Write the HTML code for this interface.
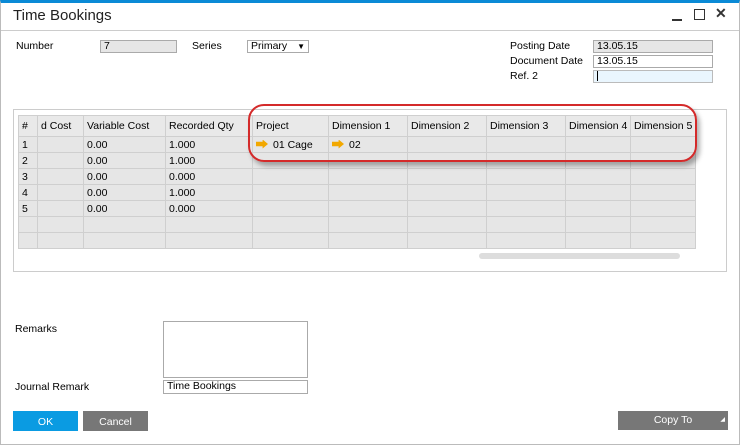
<!DOCTYPE html>
<html><head><style>
*{margin:0;padding:0;box-sizing:border-box}
body{width:740px;height:445px;background:#fff;font-family:"Liberation Sans",sans-serif;font-size:10.5px;color:#000;position:relative;overflow:hidden}
.a{position:absolute}
.frame{left:0;top:0;width:740px;height:445px;border:1px solid #bbb;border-top:3px solid #0a8ad6}
.inp{position:absolute;height:13px;border:1px solid #aaa;padding-left:3px;line-height:11px;font-size:10.5px}
table{border-collapse:collapse;position:absolute;left:18px;top:115px}
td{border:1px solid #cfcfcf;background:#e6e6e6;height:16px;padding-left:3px;font-size:10.5px;white-space:nowrap;overflow:hidden}
tr.h td{height:21px;background:#e9e9e9}
.btn{position:absolute;top:411px;height:20px;color:#fff;text-align:center;line-height:20px;font-size:10.5px}
.arr{display:inline-block;width:12px;height:9px;background:#f2a800;clip-path:polygon(0 25%,55% 25%,55% 0,100% 50%,55% 100%,55% 75%,0 75%);margin-right:5px;vertical-align:-1px}
</style></head><body>
<div class="a frame"></div>
<div class="a" style="left:13px;top:7px;font-size:15px;color:#222">Time Bookings</div>
<div class="a" style="left:1px;top:30px;width:738px;height:1px;background:#ccc"></div>
<div class="a" style="left:672px;top:19px;width:10px;height:2px;background:#333"></div>
<div class="a" style="left:694px;top:9px;width:11px;height:11px;border:1.5px solid #333"></div>
<div class="a" style="left:715px;top:5px;font-size:14px;font-weight:bold;color:#333">✕</div>

<div class="a" style="left:16px;top:40px">Number</div>
<div class="inp" style="left:100px;top:40px;width:77px;background:#e6e6e6">7</div>
<div class="a" style="left:192px;top:40px">Series</div>
<div class="inp" style="left:247px;top:40px;width:62px;background:#fff">Primary<span style="position:absolute;right:3px;top:0;font-size:8px">▼</span></div>
<div class="a" style="left:510px;top:40px">Posting Date</div>
<div class="inp" style="left:593px;top:40px;width:120px;background:#e6e6e6">13.05.15</div>
<div class="a" style="left:510px;top:55px">Document Date</div>
<div class="inp" style="left:593px;top:55px;width:120px;background:#fff">13.05.15</div>
<div class="a" style="left:510px;top:70px">Ref. 2</div>
<div class="inp" style="left:593px;top:70px;width:120px;background:#eaf6fe;border-color:#bbb"><span style="display:inline-block;width:1px;height:10px;background:#000;margin-top:0"></span></div>

<div class="a" style="left:13px;top:109px;width:714px;height:163px;border:1px solid #ccc"></div>
<table>
<tr class="h"><td style="width:19px">#</td><td style="width:46px">d Cost</td><td style="width:82px">Variable Cost</td><td style="width:87px">Recorded Qty</td><td style="width:76px">Project</td><td style="width:79px">Dimension 1</td><td style="width:79px">Dimension 2</td><td style="width:79px">Dimension 3</td><td style="width:65px">Dimension 4</td><td style="width:65px">Dimension 5</td></tr>
<tr><td>1</td><td></td><td>0.00</td><td>1.000</td><td><span class="arr"></span>01 Cage</td><td><span class="arr"></span>02</td><td></td><td></td><td></td><td></td></tr>
<tr><td>2</td><td></td><td>0.00</td><td>1.000</td><td></td><td></td><td></td><td></td><td></td><td></td></tr>
<tr><td>3</td><td></td><td>0.00</td><td>0.000</td><td></td><td></td><td></td><td></td><td></td><td></td></tr>
<tr><td>4</td><td></td><td>0.00</td><td>1.000</td><td></td><td></td><td></td><td></td><td></td><td></td></tr>
<tr><td>5</td><td></td><td>0.00</td><td>0.000</td><td></td><td></td><td></td><td></td><td></td><td></td></tr>
<tr><td></td><td></td><td></td><td></td><td></td><td></td><td></td><td></td><td></td><td></td></tr>
<tr><td></td><td></td><td></td><td></td><td></td><td></td><td></td><td></td><td></td><td></td></tr>
</table>
<div class="a" style="left:479px;top:253px;width:201px;height:6px;border-radius:3px;background:#ddd"></div>
<div class="a" style="left:248px;top:104px;width:449px;height:58px;border:2.5px solid #d42a2a;border-radius:16px;box-shadow:3px 4px 5px rgba(0,0,0,.3)"></div>

<div class="a" style="left:15px;top:323px">Remarks</div>
<div class="a" style="left:163px;top:321px;width:145px;height:57px;border:1px solid #aaa"></div>
<div class="a" style="left:15px;top:381px">Journal Remark</div>
<div class="inp" style="left:163px;top:380px;width:145px;height:14px;background:#fff">Time Bookings</div>

<div class="btn" style="left:13px;width:65px;background:#0a9be2;padding-top:1px">OK</div>
<div class="btn" style="left:83px;width:65px;background:#777;padding-top:1px">Cancel</div>
<div class="btn" style="left:618px;width:110px;background:#777;height:19px;line-height:18px">Copy To<span style="position:absolute;right:3px;bottom:1px;font-size:6px">◢</span></div>
</body></html>
